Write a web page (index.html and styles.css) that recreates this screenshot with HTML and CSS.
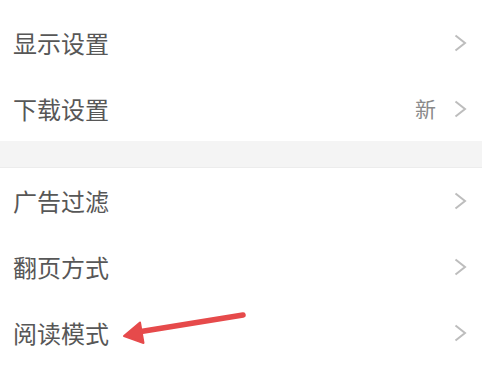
FILE: index.html
```html
<!DOCTYPE html>
<html lang="zh">
<head>
<meta charset="utf-8">
<link rel="stylesheet" href="styles.css">
</head>
<body>
<div class="page">
  <div class="group first">
    <div class="row"><span class="label">显示设置</span><span class="right"><svg class="chev" viewBox="0 0 13 18"><path d="M1.5 1.5 L11 9 L1.5 16.5"/></svg></span></div>
    <div class="row"><span class="label">下载设置</span><span class="right"><span class="badge">新</span><svg class="chev" viewBox="0 0 13 18"><path d="M1.5 1.5 L11 9 L1.5 16.5"/></svg></span></div>
  </div>
  <div class="gap"></div>
  <div class="group">
    <div class="row"><span class="label">广告过滤</span><span class="right"><svg class="chev" viewBox="0 0 13 18"><path d="M1.5 1.5 L11 9 L1.5 16.5"/></svg></span></div>
    <div class="row"><span class="label">翻页方式</span><span class="right"><svg class="chev" viewBox="0 0 13 18"><path d="M1.5 1.5 L11 9 L1.5 16.5"/></svg></span></div>
    <div class="row"><span class="label">阅读模式</span><span class="right"><svg class="chev" viewBox="0 0 13 18"><path d="M1.5 1.5 L11 9 L1.5 16.5"/></svg></span></div>
  </div>
  <svg class="arrow" viewBox="0 0 482 375" width="482" height="375">
    <line x1="243" y1="315" x2="138" y2="332" stroke="#e64a4b" stroke-width="5.5" stroke-linecap="round"/>
    <polygon points="124,336 140,322.5 143.5,343" fill="#e64a4b" stroke="#e64a4b" stroke-width="2" stroke-linejoin="round"/>
  </svg>
</div>
</body>
</html>
```

FILE: styles.css
```css
html, body {
  margin: 0;
  padding: 0;
  background: #ffffff;
}
.page {
  position: relative;
  width: 482px;
  height: 375px;
  overflow: hidden;
  font-family: "Noto Sans CJK SC", "Noto Sans", sans-serif;
}
.group.first {
  padding-top: 10px;
}
.row {
  height: 66px;
  display: flex;
  align-items: center;
  justify-content: space-between;
  padding: 0 15px 0 13px;
}
.group.first .row:last-child {
  height: 65px;
}
.label {
  font-size: 24px;
  color: #575757;
  line-height: 1;
}
.right {
  display: flex;
  align-items: center;
  gap: 18px;
}
.badge {
  font-size: 21px;
  color: #8a8a8a;
  line-height: 1;
}
.chev {
  width: 13px;
  height: 18px;
  display: block;
}
.chev path {
  fill: none;
  stroke: #bdbdbd;
  stroke-width: 2;
}
.gap {
  height: 26px;
  background: #f4f4f4;
  border-bottom: 1px solid #ececec;
}
.arrow {
  position: absolute;
  left: 0;
  top: 0;
  pointer-events: none;
}
```
